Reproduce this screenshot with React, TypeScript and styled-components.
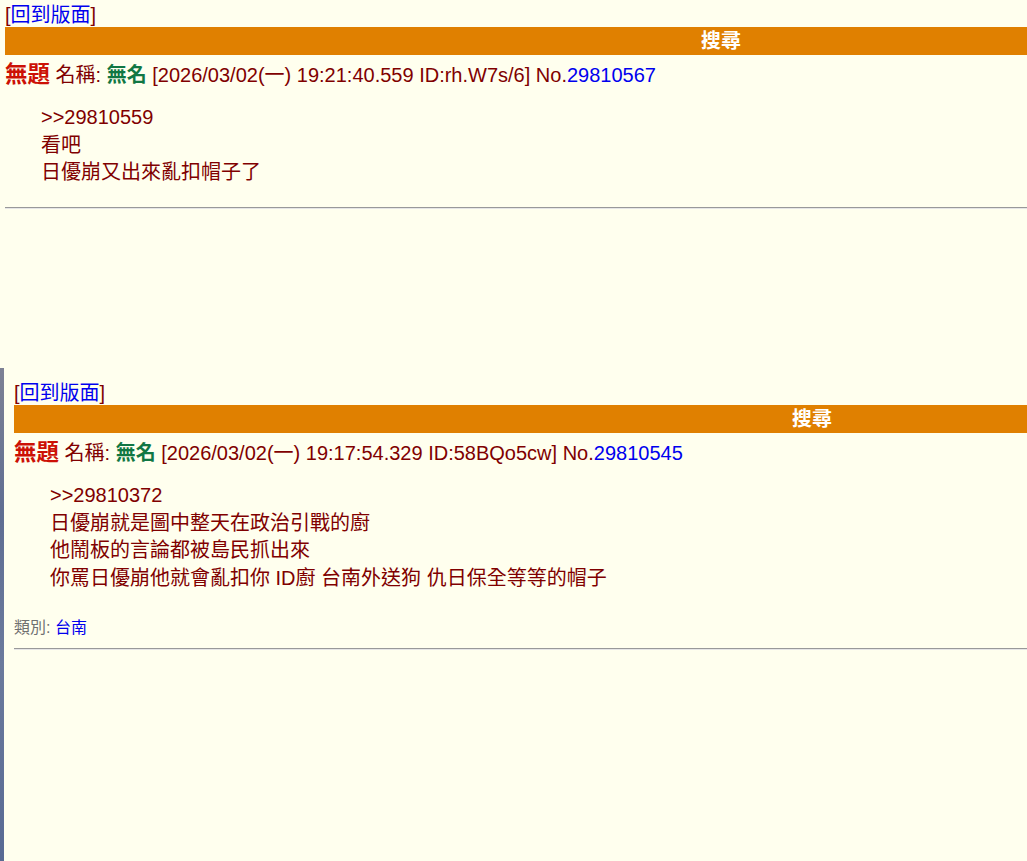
import React from 'react';
import styled, { createGlobalStyle } from 'styled-components';

const GlobalStyle = createGlobalStyle`
  html, body {
    margin: 0;
    padding: 0;
    background: #ffffee;
  }
  body {
    font-family: "Liberation Sans", Arial, "Noto Sans CJK TC", sans-serif;
    color: #800000;
    overflow: hidden;
  }
`;

interface Post {
  no: string;
  date: string;
  id: string;
  lines: string[];
  category?: string;
  searchOffset: number;
}

const posts: Post[] = [
  {
    no: '29810567',
    date: '2026/03/02(一) 19:21:40.559',
    id: 'rh.W7s/6',
    lines: ['>>29810559', '看吧', '日優崩又出來亂扣帽子了'],
    searchOffset: 696,
  },
  {
    no: '29810545',
    date: '2026/03/02(一) 19:17:54.329',
    id: '58BQo5cw',
    lines: [
      '>>29810372',
      '日優崩就是圖中整天在政治引戰的廚',
      '他鬧板的言論都被島民抓出來',
      '你罵日優崩他就會亂扣你 ID廚 台南外送狗 仇日保全等等的帽子',
    ],
    category: '台南',
    searchOffset: 778,
  },
];

const Frame = styled.div`
  display: flex;
  flex-direction: column;
  width: 1027px;
  height: 861px;
  overflow: hidden;
`;

const TopWindow = styled.div`
  height: 368px;
  flex: none;
  overflow: hidden;
`;

const LowerWindow = styled.div`
  flex: 1;
  display: flex;
  min-height: 0;
`;

const Strip = styled.div`
  width: 4px;
  flex: none;
  background: linear-gradient(180deg, #7d8194 0%, #5f6e92 30%, #6b7a9c 60%, #586a93 100%);
`;

const Page = styled.div<{ $top: number; $left: number }>`
  flex: 1;
  min-width: 0;
  padding: ${p => p.$top}px 0 0 ${p => p.$left}px;
  font-size: 20px;
`;

const BackLine = styled.div`
  line-height: 24px;
  height: 24px;
  color: #800000;
`;

const Link = styled.a`
  color: #0000ee;
  text-decoration: none;
`;

const SearchBar = styled.div<{ $offset: number }>`
  height: 28px;
  line-height: 28px;
  background: #e08000;
  color: #ffffff;
  font-weight: bold;
  font-size: 20px;
  padding-left: ${p => p.$offset}px;
`;

const Header = styled.div`
  margin-top: 8px;
  line-height: 24px;
  white-space: nowrap;
`;

const Title = styled.span`
  color: #cc1105;
  font-weight: bold;
  font-size: 22.5px;
`;

const Name = styled.span`
  color: #117743;
  font-weight: bold;
`;

const Number = styled.a`
  color: #0000ee;
  text-decoration: none;
`;

const Quote = styled.div`
  margin: 17px 0 0 36px;
  line-height: 27.5px;
`;

const Category = styled.div`
  margin-top: 25px;
  font-size: 16px;
  line-height: 22px;
  color: #707070;
`;

const Rule = styled.hr<{ $gap: number }>`
  margin: ${p => p.$gap}px 0 0 0;
  height: 0;
  border: none;
  border-top: 1px solid #999999;
  border-bottom: 1px solid #e6e6e6;
`;

const PostBlock: React.FC<{ post: Post }> = ({ post }) => (
  <>
    <BackLine>
      [<Link href="#">回到版面</Link>]
    </BackLine>
    <SearchBar $offset={post.searchOffset}>搜尋</SearchBar>
    <Header>
      <Title>無題</Title> 名稱: <Name>無名</Name> [{post.date} ID:{post.id}] No.
      <Number href="#">{post.no}</Number>
    </Header>
    <Quote>
      {post.lines.map((l, i) => (
        <div key={i}>{l}</div>
      ))}
    </Quote>
    {post.category && (
      <Category>
        類別: <Link href="#">{post.category}</Link>
      </Category>
    )}
    <Rule $gap={post.category ? 9 : 20} />
  </>
);

const App: React.FC = () => (
  <Frame>
    <GlobalStyle />
    <TopWindow>
      <Page $top={3} $left={5}>
        <PostBlock post={posts[0]} />
      </Page>
    </TopWindow>
    <LowerWindow>
      <Strip />
      <Page $top={13} $left={10}>
        <PostBlock post={posts[1]} />
      </Page>
    </LowerWindow>
  </Frame>
);

export default App;
